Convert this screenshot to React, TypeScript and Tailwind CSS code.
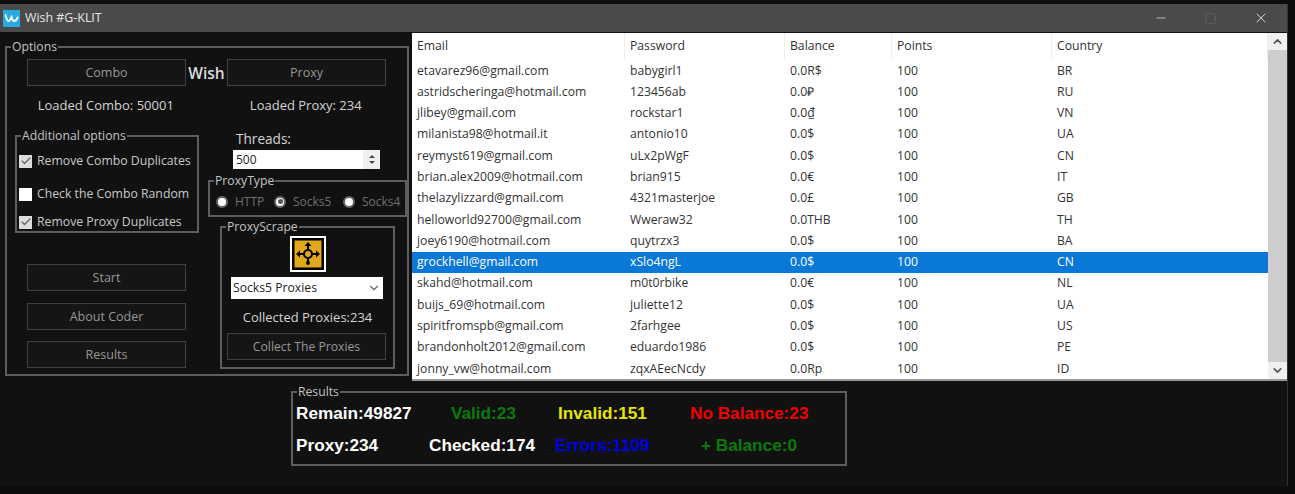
import type { ReactNode } from "react";
import { Check, ChevronDown, ChevronUp, Minus, Square, X } from "lucide-react";

const accounts = [
  ["etavarez96@gmail.com", "babygirl1", "0.0R$", "100", "BR"],
  ["astridscheringa@hotmail.com", "123456ab", "0.0₽", "100", "RU"],
  ["jlibey@gmail.com", "rockstar1", "0.0₫", "100", "VN"],
  ["milanista98@hotmail.it", "antonio10", "0.0$", "100", "UA"],
  ["reymyst619@gmail.com", "uLx2pWgF", "0.0$", "100", "CN"],
  ["brian.alex2009@hotmail.com", "brian915", "0.0€", "100", "IT"],
  ["thelazylizzard@gmail.com", "4321masterjoe", "0.0£", "100", "GB"],
  ["helloworld92700@gmail.com", "Wweraw32", "0.0THB", "100", "TH"],
  ["joey6190@hotmail.com", "quytrzx3", "0.0$", "100", "BA"],
  ["grockhell@gmail.com", "xSlo4ngL", "0.0$", "100", "CN"],
  ["skahd@hotmail.com", "m0t0rbike", "0.0€", "100", "NL"],
  ["buijs_69@hotmail.com", "juliette12", "0.0$", "100", "UA"],
  ["spiritfromspb@gmail.com", "2farhgee", "0.0$", "100", "US"],
  ["brandonholt2012@gmail.com", "eduardo1986", "0.0$", "100", "PE"],
  ["jonny_vw@hotmail.com", "zqxAEecNcdy", "0.0Rp", "100", "ID"],
];

const headers = ["Email", "Password", "Balance", "Points", "Country"];
const colWidths = ["w-[213px]", "w-[160px]", "w-[107px]", "w-[160px]", "w-[216px]"];

function Group({ title, className, children }: { title: string; className: string; children: ReactNode }) {
  return (
    <div className={`relative border-2 border-[#5e5e5e] ${className}`}>
      <span className="absolute -top-[9px] left-[4px] bg-[#111111] px-[1px] text-[12.2px] leading-4 text-[#c4c4c4]">
        {title}
      </span>
      {children}
    </div>
  );
}

function DarkButton({ label, className = "w-[159px]" }: { label: string; className?: string }) {
  return (
    <button className={`h-[27px] border border-[#404040] bg-[#151515] pt-[2px] text-[#979797] ${className}`}>
      {label}
    </button>
  );
}

function CheckRow({ label, checked, className }: { label: string; checked: boolean; className: string }) {
  return (
    <div className={`flex h-4 items-center gap-[5px] text-[12.25px] text-[#c9c9c9] ${className}`}>
      <span className={`flex h-[13px] w-[13px] items-center justify-center ${checked ? "bg-[#dddddd]" : "bg-white"}`}>
        {checked && <Check size={12} strokeWidth={2.5} className="text-[#666666]" />}
      </span>
      {label}
    </div>
  );
}

function Radio({ label, checked, className }: { label: string; checked?: boolean; className: string }) {
  return (
    <div className={`flex items-center gap-[7px] text-[12px] text-[#6f6f6f] ${className}`}>
      <span className="flex h-[12px] w-[12px] items-center justify-center rounded-full border-2 border-[#666666] bg-white">
        {checked && <span className="h-[5px] w-[5px] rounded-full bg-[#555555]" />}
      </span>
      {label}
    </div>
  );
}

function ScrapeIcon() {
  return (
    <svg width="36" height="36" viewBox="0 0 36 36" className="mx-auto block">
      <rect x="1" y="1" width="34" height="34" fill="#000" stroke="#fff" strokeWidth="2" />
      <rect x="4.5" y="4.5" width="27" height="27" fill="#e0a61c" />
      <circle cx="18" cy="18" r="4" fill="none" stroke="#000" strokeWidth="2" />
      <path d="M18 14V9M18 22v4M14 18H9M22 18h5" stroke="#000" strokeWidth="2" />
      <path d="M18 6l-3.5 4h7zM6 18l4-3.5v7zM30 18l-4-3.5v7z" fill="#000" />
      <circle cx="18" cy="27" r="2" fill="#000" />
    </svg>
  );
}

function WishLogo() {
  return (
    <svg width="17" height="17" viewBox="0 0 17 17" className="block">
      <rect width="17" height="17" fill="#2aa8e0" />
      <path
        d="M2.5 5c.8 2.5 1.4 6 3.2 6 1.6 0 2-3 2.8-4.2.5 1.6 1 4.2 2.8 4.2 1.6 0 2.6-1.6 3.4-3.6"
        fill="none"
        stroke="#fff"
        strokeWidth="1.8"
        strokeLinecap="round"
      />
    </svg>
  );
}

function Stat({ text, color, className }: { text: string; color: string; className: string }) {
  return <span className={`absolute whitespace-nowrap ${color} ${className}`}>{text}</span>;
}

export default function App() {
  return (
    <div className="h-[494px] w-[1295px] overflow-hidden bg-[#0d0d0d] pt-[4px] font-['Open_Sans',sans-serif] text-[12.5px]">
      <div className="h-[482px] w-[1288px] border-r border-[#333333] bg-[#111111]">
        {/* title bar */}
        <div className="flex h-[28px] items-center bg-[#4a4a4a] pl-[3px] text-[12.4px] text-[#e6e6e6]">
          <WishLogo />
          <span className="ml-[5px]">Wish #G-KLIT</span>
          <div className="ml-auto flex items-center gap-[36px] pr-[18px]">
            <Minus size={14} className="text-[#e8e8e8]" strokeWidth={1.2} />
            <Square size={13} className="text-[#666666]" strokeWidth={1.2} />
            <X size={16} className="text-[#f0f0f0]" strokeWidth={1.2} />
          </div>
        </div>

        <div className="flex">
          {/* options */}
          <div className="pl-[5px] pt-[14px]">
            <Group title="Options" className="h-[330px] w-[404px]">
              <div className="flex items-center pl-[20px] pt-[11px]">
                <DarkButton label="Combo" />
                <span className="w-[41px] pt-[2px] text-center text-[15.5px] font-semibold text-[#dcdcdc]">Wish</span>
                <DarkButton label="Proxy" />
              </div>
              <div className="mt-[10px] flex h-4 text-[13px] text-[#d4d4d4]">
                <span className="w-[198px] text-center">Loaded Combo: 50001</span>
                <span className="w-[203px] text-center">Loaded Proxy: 234</span>
              </div>
              <div className="flex">
                <div className="w-[200px] pt-[23px]">
                  <Group title="Additional options" className="ml-[8px] h-[98px] w-[184px]">
                    <div className="pl-[2px] pt-[16px]">
                      <CheckRow label="Remove Combo Duplicates" checked className="" />
                      <CheckRow label="Check the Combo Random" checked={false} className="mt-[17px]" />
                      <CheckRow label="Remove Proxy Duplicates" checked className="mt-[12px]" />
                    </div>
                  </Group>
                  <div className="ml-[20px] flex flex-col gap-[11.5px] pt-[31px]">
                    <DarkButton label="Start" />
                    <DarkButton label="About Coder" />
                    <DarkButton label="Results" />
                  </div>
                </div>
                <div className="w-[200px] pt-[17px]">
                  <div className="ml-[29px] h-4 text-[13.6px] text-[#d4d4d4]">Threads:</div>
                  <div className="ml-[26px] mt-[5px] flex h-[19px] w-[147px] items-center justify-between bg-white pl-[3px] text-[12px] text-[#222222]">
                    500
                    <span className="flex h-full w-[17px] flex-col items-center justify-center gap-[3px] bg-[#f0f0f0]">
                      <span className="h-0 w-0 border-x-[3px] border-b-[3px] border-x-transparent border-b-[#444444]" />
                      <span className="h-0 w-0 border-x-[3px] border-t-[3px] border-x-transparent border-t-[#444444]" />
                    </span>
                  </div>
                  <Group title="ProxyType" className="ml-px mt-[11px] h-[37px] w-[199px]">
                    <div className="flex h-full items-center pl-[6px] pt-[6px]">
                      <Radio label="HTTP" className="w-[58px]" />
                      <Radio label="Socks5" checked className="w-[69px]" />
                      <Radio label="Socks4" className="" />
                    </div>
                  </Group>
                  <Group title="ProxyScrape" className="ml-[13px] mt-[9px] h-[143px] w-[175px]">
                    <div className="pt-[8px]">
                      <ScrapeIcon />
                    </div>
                    <div className="ml-[9px] mt-[5px] flex h-[22px] w-[152px] items-center justify-between bg-white px-[2px] text-[12.2px] font-medium text-[#222222]">
                      Socks5 Proxies
                      <ChevronDown size={14} className="text-[#666666]" />
                    </div>
                    <div className="mt-[9px] h-4 text-center text-[13px] text-[#d4d4d4]">Collected Proxies:234</div>
                    <div className="ml-[5px] mt-[9px]">
                      <DarkButton label="Collect The Proxies" className="w-[159px] text-[12.2px]" />
                    </div>
                  </Group>
                </div>
              </div>
            </Group>
          </div>

          {/* accounts */}
          <div className="ml-[3px] mt-[1px] flex h-[348px] w-[875px] border-b-2 border-[#9a9a9a] bg-white text-[12.2px]">
            <div className="w-[856px] text-[#333333]">
              <div className="flex h-[27px] items-center">
                {headers.map((h, i) => (
                  <span key={h} className={`h-full border-r border-[#eeeeee] pl-[5px] pt-[4px] ${colWidths[i]}`}>
                    {h}
                  </span>
                ))}
              </div>
              {accounts.map((row, r) => (
                <div key={row[0]} className={`flex h-[21.3px] items-center ${r === 9 ? "bg-[#0a78d7] text-white" : ""}`}>
                  {row.map((cell, c) => (
                    <span key={c} className={`pl-[5px] ${colWidths[c]}`}>
                      {cell}
                    </span>
                  ))}
                </div>
              ))}
            </div>
            <div className="flex w-[19px] flex-col bg-[#f0f0f0]">
              <div className="flex h-[17px] items-center justify-center">
                <ChevronUp size={13} strokeWidth={3} className="text-[#555555]" />
              </div>
              <div className="flex-1 bg-[#cdcdcd]" />
              <div className="flex h-[17px] items-center justify-center">
                <ChevronDown size={13} strokeWidth={3} className="text-[#555555]" />
              </div>
            </div>
          </div>
        </div>

        {/* results */}
        <div className="ml-[291px] mt-[10px]">
          <Group title="Results" className="h-[75px] w-[556px]">
            <div className="font-['Liberation_Sans',sans-serif] text-[17.2px] font-bold">
              <Stat text="Remain:49827" color="text-white" className="left-[3px] top-[8px]" />
              <Stat text="Valid:23" color="text-[#0a7a0a]" className="left-[158px] top-[8px]" />
              <Stat text="Invalid:151" color="text-[#e6e600]" className="left-[265px] top-[8px]" />
              <Stat text="No Balance:23" color="text-[#f00000]" className="left-[397px] top-[8px]" />
              <Stat text="Proxy:234" color="text-white" className="left-[3px] top-[40px]" />
              <Stat text="Checked:174" color="text-white" className="left-[136px] top-[40px]" />
              <Stat text="Errors:1109" color="text-[#0000e0]" className="left-[262px] top-[40px]" />
              <Stat text="+ Balance:0" color="text-[#0a7a0a]" className="left-[408px] top-[40px]" />
            </div>
          </Group>
        </div>
      </div>
    </div>
  );
}
